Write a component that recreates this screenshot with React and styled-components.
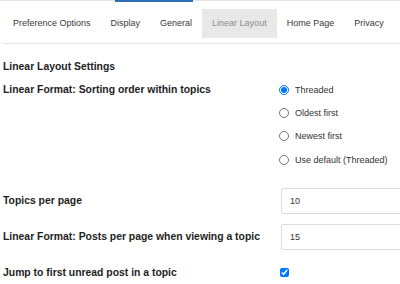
import React from 'react'
import styled, {createGlobalStyle} from 'styled-components'

const GlobalStyle = createGlobalStyle`
body {
    margin: 0;
    background: #fff;
    font-family: "Liberation Sans", Arial, sans-serif;
}
`

const tabs = ['Preference Options', 'Display', 'General', 'Linear Layout', 'Home Page', 'Privacy']
const sortOptions = ['Threaded', 'Oldest first', 'Newest first', 'Use default (Threaded)']

function App() {
  return (
    <>
      <GlobalStyle />
      <TopRule>
        <Accent />
      </TopRule>
      <Page>
        <TabBar>
          {tabs.map((t) => (
            <Tab key={t} active={t === 'Linear Layout'}>{t}</Tab>
          ))}
        </TabBar>
        <Section>
          <Heading>Linear Layout Settings</Heading>
          <Row align="start">
            <Label>Linear Format: Sorting order within topics</Label>
            <Options>
              {sortOptions.map((o, i) => (
                <Option key={o}>
                  <Radio type="radio" name="sort" defaultChecked={i === 0} />
                  {o}
                </Option>
              ))}
            </Options>
          </Row>
          <Row gap={16}>
            <Label>Topics per page</Label>
            <TextInput defaultValue="10" />
          </Row>
          <Row gap={10}>
            <Label>Linear Format: Posts per page when viewing a topic</Label>
            <TextInput defaultValue="15" />
          </Row>
          <Row gap={11}>
            <Label>Jump to first unread post in a topic</Label>
            <Check type="checkbox" defaultChecked />
          </Row>
        </Section>
      </Page>
    </>
  )
}

const TopRule = styled.div`
border-top: 1px solid #e4e4e4;
height: 0;
`
const Accent = styled.div`
margin-left: 115px;
margin-top: -1px;
width: 78px;
height: 2px;
background: #2f6db5;
`
const Page = styled.div`
padding-left: 3px;
`
const TabBar = styled.div`
display: flex;
margin-top: 8px;
padding-bottom: 5px;
border-bottom: 1px solid #e6e6e6;
`
const Tab = styled.div`
padding: 0 10px;
height: 29px;
line-height: 29px;
font-size: 9px;
color: ${(p) => (p.active ? '#8c8c8c' : '#3a3a3a')};
background: ${(p) => (p.active ? '#e8e8e8' : 'transparent')};
white-space: nowrap;
`
const Section = styled.div`
padding-top: 16px;
display: flex;
flex-direction: column;
`
const Heading = styled.div`
font-size: 10.4px;
font-weight: 700;
line-height: 13px;
color: #1e1e1e;
margin-bottom: 5px;
`
const Row = styled.div`
display: grid;
grid-template-columns: 275px 1fr;
align-items: ${(p) => (p.align === 'start' ? 'start' : 'center')};
margin-top: ${(p) => p.gap || 0}px;
`
const Label = styled.div`
font-size: 10.4px;
font-weight: 700;
line-height: 23px;
color: #1e1e1e;
white-space: nowrap;
`
const Options = styled.div`
display: flex;
flex-direction: column;
`
const Option = styled.label`
display: flex;
align-items: center;
gap: 6px;
height: 23.4px;
font-size: 9px;
color: #333;
padding-left: 1px;
`
const Radio = styled.input`
width: 10px;
height: 10px;
margin: 0;
`
const TextInput = styled.input`
margin-left: 3px;
width: 130px;
height: 26px;
box-sizing: border-box;
border: 1px solid #dcdcdc;
border-radius: 2px;
padding: 0 8px;
font-family: "Liberation Sans", Arial, sans-serif;
font-size: 9px;
color: #333;
outline: none;
`
const Check = styled.input`
margin: 0 0 0 2px;
width: 9px;
height: 9px;
`

export default App
